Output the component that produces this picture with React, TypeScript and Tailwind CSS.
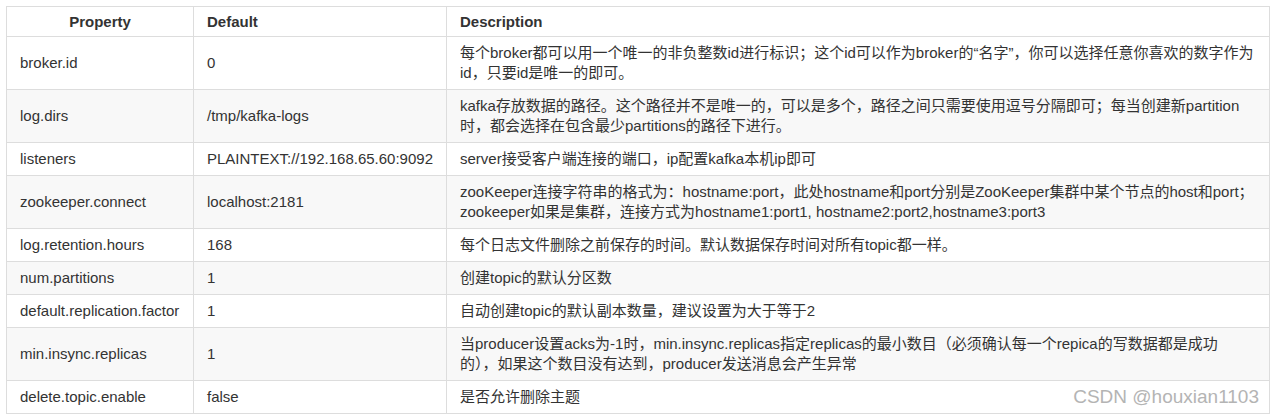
import React from 'react';

interface Row {
  name: string;
  value: string;
  desc: React.ReactNode;
}

const rows: Row[] = [
  {
    name: 'broker.id',
    value: '0',
    desc: '每个broker都可以用一个唯一的非负整数id进行标识；这个id可以作为broker的“名字”，你可以选择任意你喜欢的数字作为id，只要id是唯一的即可。',
  },
  {
    name: 'log.dirs',
    value: '/tmp/kafka-logs',
    desc: 'kafka存放数据的路径。这个路径并不是唯一的，可以是多个，路径之间只需要使用逗号分隔即可；每当创建新partition时，都会选择在包含最少partitions的路径下进行。',
  },
  {
    name: 'listeners',
    value: 'PLAINTEXT://192.168.65.60:9092',
    desc: 'server接受客户端连接的端口，ip配置kafka本机ip即可',
  },
  {
    name: 'zookeeper.connect',
    value: 'localhost:2181',
    desc: 'zooKeeper连接字符串的格式为：hostname:port，此处hostname和port分别是ZooKeeper集群中某个节点的host和port；zookeeper如果是集群，连接方式为hostname1:port1, hostname2:port2,hostname3:port3',
  },
  {
    name: 'log.retention.hours',
    value: '168',
    desc: '每个日志文件删除之前保存的时间。默认数据保存时间对所有topic都一样。',
  },
  { name: 'num.partitions', value: '1', desc: '创建topic的默认分区数' },
  {
    name: 'default.replication.factor',
    value: '1',
    desc: '自动创建topic的默认副本数量，建议设置为大于等于2',
  },
  {
    name: 'min.insync.replicas',
    value: '1',
    // the original wraps before "的）"
    desc: (
      <>
        当producer设置acks为-1时，min.insync.replicas指定replicas的最小数目（必须确认每一个repica的写数据都是成功
        <br />
        的），如果这个数目没有达到，producer发送消息会产生异常
      </>
    ),
  },
  { name: 'delete.topic.enable', value: 'false', desc: '是否允许删除主题' },
];

const App: React.FC = () => {
  return (
    <div
      className="relative w-[1275px] h-[415px] bg-white pt-[6px] pl-[6px] text-[15px] leading-5 text-[#333]"
      style={{ fontFamily: '"Liberation Sans", Arial, "Noto Sans CJK SC", sans-serif' }}
    >
      <table className="w-[1264px] table-fixed border-collapse border border-[#ddd]">
        <colgroup>
          <col className="w-[187px]" />
          <col className="w-[253px]" />
          <col />
        </colgroup>
        <thead>
          <tr>
            <th className="border border-[#ddd] pt-[5px] pb-[4px] px-[13px] text-center font-bold">
              Property
            </th>
            <th className="border border-[#ddd] pt-[5px] pb-[4px] px-[13px] text-left font-bold">
              Default
            </th>
            <th className="border border-[#ddd] pt-[5px] pb-[4px] px-[13px] text-left font-bold">
              Description
            </th>
          </tr>
        </thead>
        <tbody>
          {rows.map((row, i) => (
            <tr key={row.name} className={i % 2 === 1 ? 'bg-[#f8f8f8]' : 'bg-white'}>
              <td className="border border-[#ddd] py-[6px] px-[13px] align-middle whitespace-nowrap">
                {row.name}
              </td>
              <td className="border border-[#ddd] py-[6px] px-[13px] align-middle whitespace-nowrap">
                {row.value}
              </td>
              <td className="border border-[#ddd] py-[6px] px-[13px] align-middle">
                {row.desc}
              </td>
            </tr>
          ))}
        </tbody>
      </table>
      <div className="absolute right-[16px] bottom-[6px] text-[19px] leading-6 text-[#b4b4b4]">
        CSDN @houxian1103
      </div>
    </div>
  );
};

export default App;
